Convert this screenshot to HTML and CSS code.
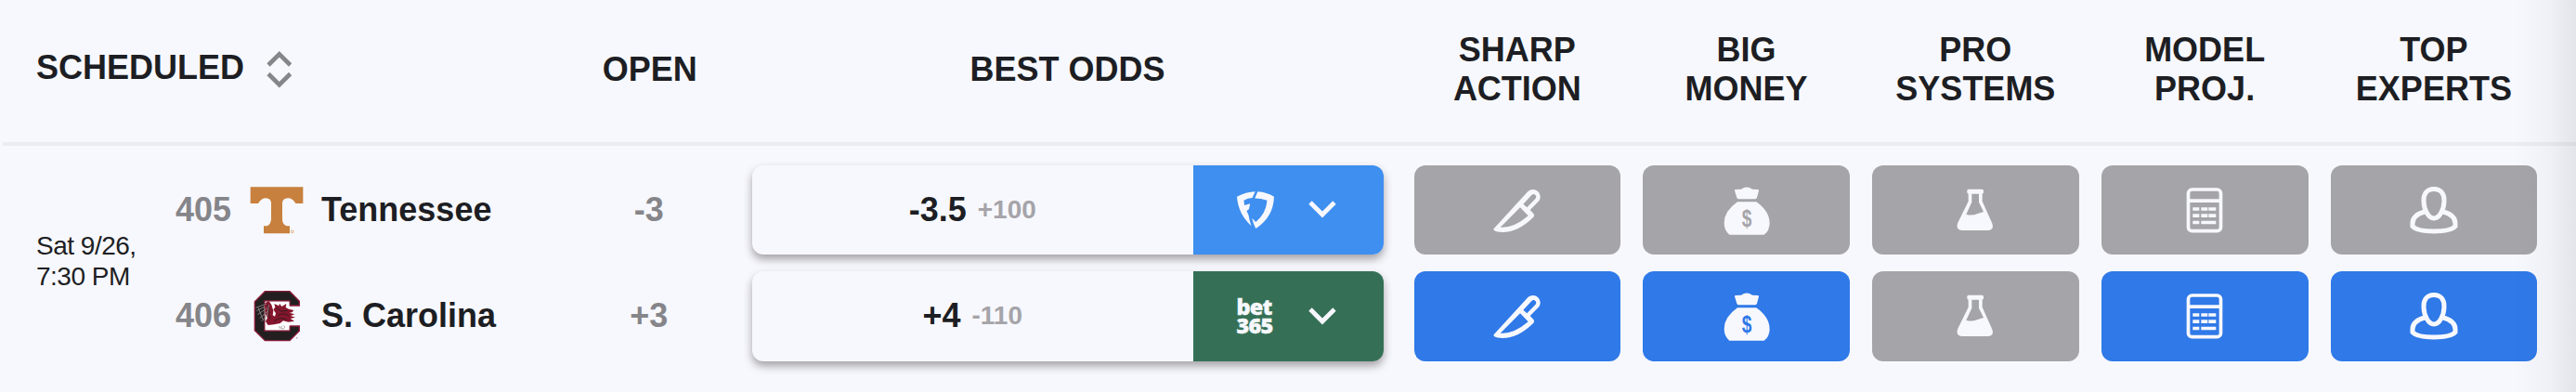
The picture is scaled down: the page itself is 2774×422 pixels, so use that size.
FILE: index.html
```html
<!DOCTYPE html>
<html lang="en">
<head>
  <meta charset="UTF-8" />
  <meta name="viewport" content="width=device-width, initial-scale=1" />
  <title>Best Odds</title>
  <link rel="stylesheet" href="styles.css">
</head>
<body>

<!-- Shared icons -->
<svg class="icon-defs" aria-hidden="true">
  <symbol id="icon-knife" viewBox="0 0 156 156">
    <path fill-rule="evenodd" d="M3 137 L113 17 A24 24 0 0 1 148 49 L119 78 L130 90 Q134 95 130 101 Q80 150 30 150 Q12 150 4 145 Q-1 141 3 137Z M87 70 L23 134 Q65 138 113 97Z M97 59 L124 30 Q131 24 137 31 Q141 36 136 42 L109 70Z" />
  </symbol>
  <symbol id="icon-money" viewBox="0 0 156 160">
    <path d="M39 16 Q38 12 42 12 L60 11 Q78 -2 96 11 L113 12 Q118 12 117 16 L111 38 Q109 43 105 43 H52 Q48 43 46 38Z" />
    <path d="M48 52 H109 Q152 82 152 122 Q151 146 134 158 H22 Q5 144 5 120 Q5 82 48 52Z" />
    <text class="money-sign" x="62.500" y="131" textLength="32" lengthAdjust="spacingAndGlyphs">$</text>
  </symbol>
  <symbol id="icon-flask" viewBox="0 0 156 156">
    <rect x="52" y="11" width="53" height="15" rx="5" />
    <path fill-rule="evenodd" d="M56 25 V50 L22 119 Q16 134 25 141 Q30 144 36 144 H120 Q128 144 133 138 Q137 131 132 119 L101 50 V25Z M67 25 V53 L49 92 Q66 98 84 91 Q96 86 105 84 L90 53 V25Z" />
  </symbol>
  <symbol id="icon-calc" viewBox="0 0 156 156">
    <rect class="line" x="25.500" y="12" width="105" height="134" rx="12" stroke-width="11" />
    <path d="M26 43h104v11H26z M40 70h21v10H40z M67 70h21v10H67z M91 70h24v10H91z M40 91h21v11H40z M67 91h21v11H67z M91 91h24v11H91z M40 113h21v11H40z M67 113h48v11H67z" />
  </symbol>
  <symbol id="icon-expert" viewBox="0 0 156 156">
    <path class="line" stroke-width="15" d="M78 10.500 C102 10.500 112 28 111 50 C110 78 96 105 78 105 C60 105 46 78 45 50 C44 28 54 10.500 78 10.500Z" />
    <path class="line" stroke-width="15" d="M47 84 C20 92 8 107 9 124 V131 C20 143 48 147 78 147 C108 147 136 143 147 131 V124 C148 107 136 92 109 84" />
  </symbol>
  <symbol id="icon-chevron" viewBox="0 0 30 19">
    <path class="line" stroke-width="4.800" d="M2 2 L15 15 L28 2" />
  </symbol>
</svg>

<div class="odds-table">

  <!-- Header -->
  <div class="table-row table-head">
    <div class="head-cell scheduled">
      <span>SCHEDULED</span>
      <svg class="sort-icon" viewBox="0 0 28 40"><path d="M2 15 L13.800 3.300 L25.600 15 M2 24.500 L13.800 36.200 L25.600 24.500" /></svg>
    </div>
    <div class="head-cell">OPEN</div>
    <div class="head-cell">BEST ODDS</div>
    <div class="head-cell">SHARP<br>ACTION</div>
    <div class="head-cell">BIG<br>MONEY</div>
    <div class="head-cell">PRO<br>SYSTEMS</div>
    <div class="head-cell">MODEL<br>PROJ.</div>
    <div class="head-cell">TOP<br>EXPERTS</div>
  </div>

  <!-- Game -->
  <div class="table-row table-body">
    <div class="matchup">
      <div class="game-time">Sat 9/26,<br>7:30 PM</div>
      <div class="stack">
        <div class="team">
          <span class="rotation">405</span>
          <svg class="team-logo" viewBox="0 0 174 168">
            <path fill="#c8803e" d="M2 10 H172 V63 H148 Q139 46 123 46 Q107 47 105 60 V115 Q106 132 119 136 H129 V160 H45 V136 H56 Q67 131 69 115 V60 Q67 47 52 46 Q37 46 27 63 H2Z" />
            <circle cx="137" cy="154" r="4" fill="none" stroke="#dca878" stroke-width="3" />
          </svg>
          <span class="team-name">Tennessee</span>
        </div>
        <div class="team">
          <span class="rotation">406</span>
          <svg class="team-logo" viewBox="0 0 174 168">
            <path fill="#231f20" stroke="#8c1d3a" stroke-width="4" d="M49 5 H129 L160 37 V51 H129 V36 H48 V132 H129 V117 H160 V133 L129 164 H49 L16 131 V38Z" />
            <path fill="#fff" d="M50 38 H127 V52 L138 66 L142 90 L127 118 V130 H50Z" />
            <path fill="#85152c" d="M47 44 L61 36 L70 48 L76 68 L74 82 L81 86 L84 76 L76 64 L82 56 L79 45 L94 52 L96 44 L103 54 L118 45 L116 57 L126 62 L142 66 L136 73 L128 74 L145 79 L132 84 L147 89 L131 93 L144 101 L125 104 L108 100 L98 108 L79 112 L59 114 L51 102 L57 90 L49 75Z" />
            <path fill="none" stroke="#231f20" stroke-width="2.500" d="M86 58 L101 69 L122 67 M91 83 Q108 72 126 84 M79 101 Q97 86 119 96 M57 47 L65 75 M56 66 L66 94" />
            <path fill="none" stroke="#8f8a8d" stroke-width="2.500" d="M19 58 L54 45 M22 68 L49 54 M25 80 L56 59 M32 92 L58 69 M38 102 L57 82 M27 58 L43 97 M47 53 L50 104 M61 48 L56 86" />
            <path fill="none" stroke="#777" stroke-width="2" d="M94 117 L99 126 M103 116 Q99 128 108 126 Q117 121 110 115" />
            <circle cx="152" cy="155" r="2.500" fill="#aaa" />
          </svg>
          <span class="team-name">S. Carolina</span>
        </div>
      </div>
    </div>

    <div class="stack">
      <div class="open-line">-3</div>
      <div class="open-line">+3</div>
    </div>

    <div class="stack best-odds">
      <div class="odds-box">
        <div class="odds-value">
          <span class="line-value">-3.5</span>
          <span class="line-price">+100</span>
        </div>
        <div class="book book-fanduel">
          <svg class="fanduel-logo" viewBox="0 0 118 118">
            <path d="M0 17 Q28 2 58 1 L49 21 Q34 22 22 29 L24 44 L42 39 L38 57 L31 62 L37 76 Q40 95 46 110 Q4 72 0 17Z" />
            <path d="M66 1 Q95 3 118 17 Q116 82 60 118 Q52 105 48 85 L60 97 Q92 72 96 29 Q76 22 57 22Z" />
          </svg>
          <svg class="chevron"><use href="#icon-chevron" /></svg>
        </div>
      </div>
      <div class="odds-box">
        <div class="odds-value">
          <span class="line-value">+4</span>
          <span class="line-price">-110</span>
        </div>
        <div class="book book-bet365">
          <span class="bet365-logo">bet<br>365</span>
          <svg class="chevron"><use href="#icon-chevron" /></svg>
        </div>
      </div>
    </div>

    <div class="stack signals">
      <div class="signal"><svg class="icon"><use href="#icon-knife" /></svg></div>
      <div class="signal active"><svg class="icon"><use href="#icon-knife" /></svg></div>
    </div>
    <div class="stack signals">
      <div class="signal"><svg class="icon icon-bag"><use href="#icon-money" /></svg></div>
      <div class="signal active"><svg class="icon icon-bag"><use href="#icon-money" /></svg></div>
    </div>
    <div class="stack signals">
      <div class="signal"><svg class="icon"><use href="#icon-flask" /></svg></div>
      <div class="signal"><svg class="icon"><use href="#icon-flask" /></svg></div>
    </div>
    <div class="stack signals">
      <div class="signal"><svg class="icon"><use href="#icon-calc" /></svg></div>
      <div class="signal active"><svg class="icon"><use href="#icon-calc" /></svg></div>
    </div>
    <div class="stack signals">
      <div class="signal"><svg class="icon"><use href="#icon-expert" /></svg></div>
      <div class="signal active"><svg class="icon"><use href="#icon-expert" /></svg></div>
    </div>
  </div>

  <!-- Scroll shadow on the right edge -->
  <div class="scroll-shadow"></div>
</div>

</body>
</html>
```

FILE: styles.css
```css
* {
  box-sizing: border-box;
}

body {
  font-family: "Liberation Sans", Arial, sans-serif;
  margin: 0;
  background-color: #f7f8fd;
  color: #1d1e23;
}

.icon-defs {
  display: none;
}

.odds-table {
  position: relative;
  height: 422px;
  padding-left: 3px;
  overflow: hidden;
}

.table-row {
  display: grid;
  grid-template-columns: 608px 177.5px 722px repeat(5, 246.75px);
}

/* Header */
.table-head {
  height: 157px;
  border-bottom: 4px solid #ebecf1;
}

.head-cell {
  display: flex;
  align-items: center;
  justify-content: center;
  padding-bottom: 3px;
  font-size: 36px;
  font-weight: bold;
  line-height: 42px;
  text-align: center;
}

.scheduled {
  justify-content: flex-start;
  gap: 24px;
  padding-left: 36px;
}

.scheduled span {
  margin-top: -4px;
}

.sort-icon {
  width: 28px;
  height: 40px;
  fill: none;
  stroke: #85858a;
  stroke-width: 4.6;
}

/* Game rows */
.table-body {
  padding-top: 20.5px;
}

.stack {
  display: grid;
  grid-template-rows: 96.5px 96.5px;
  gap: 18px;
}

.matchup {
  display: flex;
  align-items: center;
  padding-left: 36px;
}

.game-time {
  width: 150px;
  margin-top: -4px;
  font-size: 28px;
  line-height: 33px;
  letter-spacing: -0.5px;
}

.team {
  display: flex;
  align-items: center;
  font-size: 36px;
  font-weight: bold;
  line-height: 42px;
}

.rotation {
  width: 80px;
  color: #85858a;
}

.team-logo {
  width: 58px;
  height: 56px;
  margin-right: 19px;
}

.open-line {
  display: flex;
  align-items: center;
  justify-content: center;
  padding-right: 2px;
  color: #85858a;
  font-size: 36px;
  font-weight: bold;
  line-height: 42px;
}

/* Best odds */
.best-odds {
  padding: 0 20.5px 0 21px;
}

.odds-box {
  display: flex;
  border-radius: 12px;
  background-color: #f7f8fd;
  box-shadow: 0 5px 10px rgba(40, 30, 35, 0.4);
  overflow: hidden;
}

.odds-value {
  display: flex;
  flex: 1;
  align-items: center;
  justify-content: center;
  gap: 12px;
  font-weight: bold;
  line-height: 42px;
}

.line-value {
  font-size: 36px;
}

.line-price {
  color: #a5a4a9;
  font-size: 28px;
}

.book {
  display: flex;
  align-items: center;
  width: 205px;
  padding-left: 46.5px;
  color: #f7f8fd;
  fill: #f7f8fd;
}

.book-fanduel {
  background-color: #3e8ff0;
}

.book-bet365 {
  background-color: #357056;
}

.fanduel-logo {
  width: 40px;
  height: 40px;
}

.bet365-logo {
  width: 40px;
  font-family: "Open Sans", sans-serif;
  font-size: 23.5px;
  font-weight: 800;
  line-height: 20.5px;
  letter-spacing: -0.8px;
  -webkit-text-stroke: 0.4px #f7f8fd;
}

.chevron {
  width: 30px;
  height: 19px;
  margin-left: 37px;
}

.line {
  fill: none;
  stroke: #f7f8fd;
}

/* Signal buttons */
.signals {
  padding: 0 12px;
}

.signal {
  display: flex;
  align-items: center;
  justify-content: center;
  border-radius: 12px;
  background-color: #a5a4a9;
  color: #a5a4a9;
}

.signal.active {
  background-color: #2f79e8;
  color: #2f79e8;
}

.icon {
  width: 52px;
  height: 52px;
  fill: #f7f8fd;
}

.icon-bag {
  height: 53.3px;
  margin-top: 1.3px;
}

.money-sign {
  fill: currentColor;
  font-size: 76px;
  font-weight: bold;
}

.scroll-shadow {
  position: absolute;
  top: 0;
  right: 0;
  bottom: 0;
  width: 66px;
  background: linear-gradient(to right, rgba(30, 30, 35, 0), rgba(30, 30, 35, 0.03) 55%, rgba(30, 30, 35, 0.09));
  pointer-events: none;
}
```
